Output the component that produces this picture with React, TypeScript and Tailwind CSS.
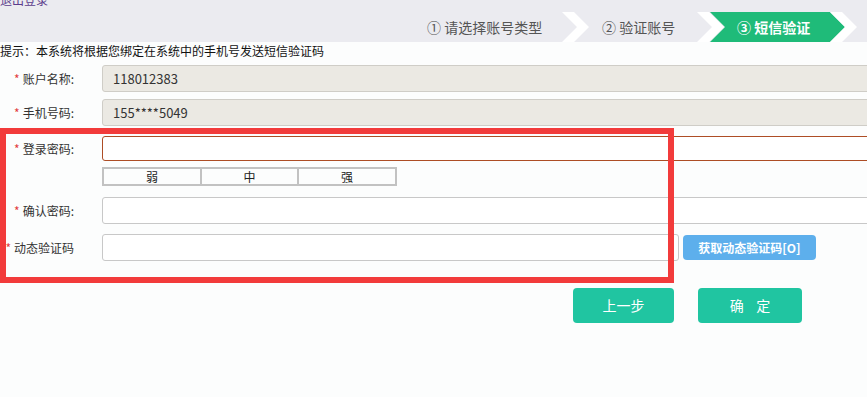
import React from "react";

const font = { fontFamily: '"Noto Sans CJK SC", "Noto Sans", sans-serif' };

const Label: React.FC<{ text: string }> = ({ text }) => (
  <div className="flex w-[102px] shrink-0 items-center justify-end pr-[28px] text-[12px] text-[#333]">
    <span className="mr-[3px] text-[#e23c3c]">*</span>
    {text}
  </div>
);

const StepTabs: React.FC = () => (
  <div className="relative h-[30px]">
    <svg className="absolute left-[420px] top-0" width="447" height="30" viewBox="0 0 447 30">
      <polygon points="142,0 154,0 169,15 154,30 142,30 157,15" fill="#ffffff" />
      <polygon points="277,0 289,0 304,15 289,30 277,30 292,15" fill="#ffffff" />
      <polygon points="290,0 410,0 425,15 410,30 290,30 305,15" fill="#1fbb79" />
      <polygon points="410,0 422,0 437,15 422,30 410,30 425,15" fill="#ffffff" />
    </svg>
    <div className="relative flex h-full items-center pl-[427px] text-[14px]">
      <span className="w-[175px] text-[#555]">① 请选择账号类型</span>
      <span className="w-[135px] text-[#555]">② 验证账号</span>
      <span className="font-bold text-white">③ 短信验证</span>
    </div>
  </div>
);

export default function App() {
  return (
    <div className="relative h-[397px] w-[867px] overflow-hidden bg-[#fcfdfd]" style={font}>
      <div className="h-[42px] bg-[#ebebf0] pt-[12px]">
        <div className="absolute left-0 top-[-9px] text-[12px] text-[#5b3b8c]">退出登录</div>
        <StepTabs />
      </div>

      <div className="mt-[2px] text-[12px] leading-[14px] text-[#111]">
        提示：本系统将根据您绑定在系统中的手机号发送短信验证码
      </div>

      <div className="mt-[7px] flex h-[27px]">
        <Label text="账户名称:" />
        <div className="flex w-[800px] shrink-0 items-center rounded-[3px] border border-[#cfcdc7] bg-[#ebe9e3] pl-[10px] text-[13px] text-[#333]">
          118012383
        </div>
      </div>

      <div className="mt-[7px] flex h-[27px]">
        <Label text="手机号码:" />
        <div className="flex w-[800px] shrink-0 items-center rounded-[3px] border border-[#cfcdc7] bg-[#ebe9e3] pl-[10px] text-[13px] text-[#333]">
          155****5049
        </div>
      </div>

      <div className="mt-[10px] flex h-[25px]">
        <Label text="登录密码:" />
        <input
          type="password"
          className="h-full w-[800px] shrink-0 rounded-[3px] border border-[#ad4d25] bg-white outline-none"
        />
      </div>

      <div className="mt-[6px] flex pl-[102px]">
        <div className="flex h-[19px] border-2 border-[#c2c2c2] text-[12px] text-[#222]">
          <div className="flex w-[96px] items-center justify-center">弱</div>
          <div className="flex w-[97px] items-center justify-center border-l-2 border-[#c2c2c2]">中</div>
          <div className="flex w-[98px] items-center justify-center border-l-2 border-[#c2c2c2]">强</div>
        </div>
      </div>

      <div className="mt-[11px] flex h-[27px]">
        <Label text="确认密码:" />
        <input
          type="password"
          className="h-full w-[800px] shrink-0 rounded-[3px] border border-[#c8c8c8] bg-white outline-none"
        />
      </div>

      <div className="mt-[10px] flex h-[27px] items-center">
        <Label text="动态验证码" />
        <input
          type="text"
          className="h-full w-[577px] shrink-0 rounded-[3px] border border-[#c8c8c8] bg-white outline-none"
        />
        <button className="ml-[4px] h-[25px] w-[133px] rounded-[4px] bg-[#5dafec] text-[12px] font-bold text-white">
          获取动态验证码[O]
        </button>
      </div>

      <div className="mt-[27px] flex pl-[573px]">
        <button className="h-[35px] w-[101px] rounded-[4px] bg-[#20c5a1] text-[14px] text-white">上一步</button>
        <button className="ml-[24px] h-[35px] w-[104px] rounded-[4px] bg-[#20c5a1] text-[14px] text-white">
          确&nbsp;&nbsp;&nbsp;&nbsp;定
        </button>
      </div>

      <div className="pointer-events-none absolute left-0 top-[128px] h-[155px] w-[674px] border-[6px] border-[#f23b3b]" />
    </div>
  );
}
